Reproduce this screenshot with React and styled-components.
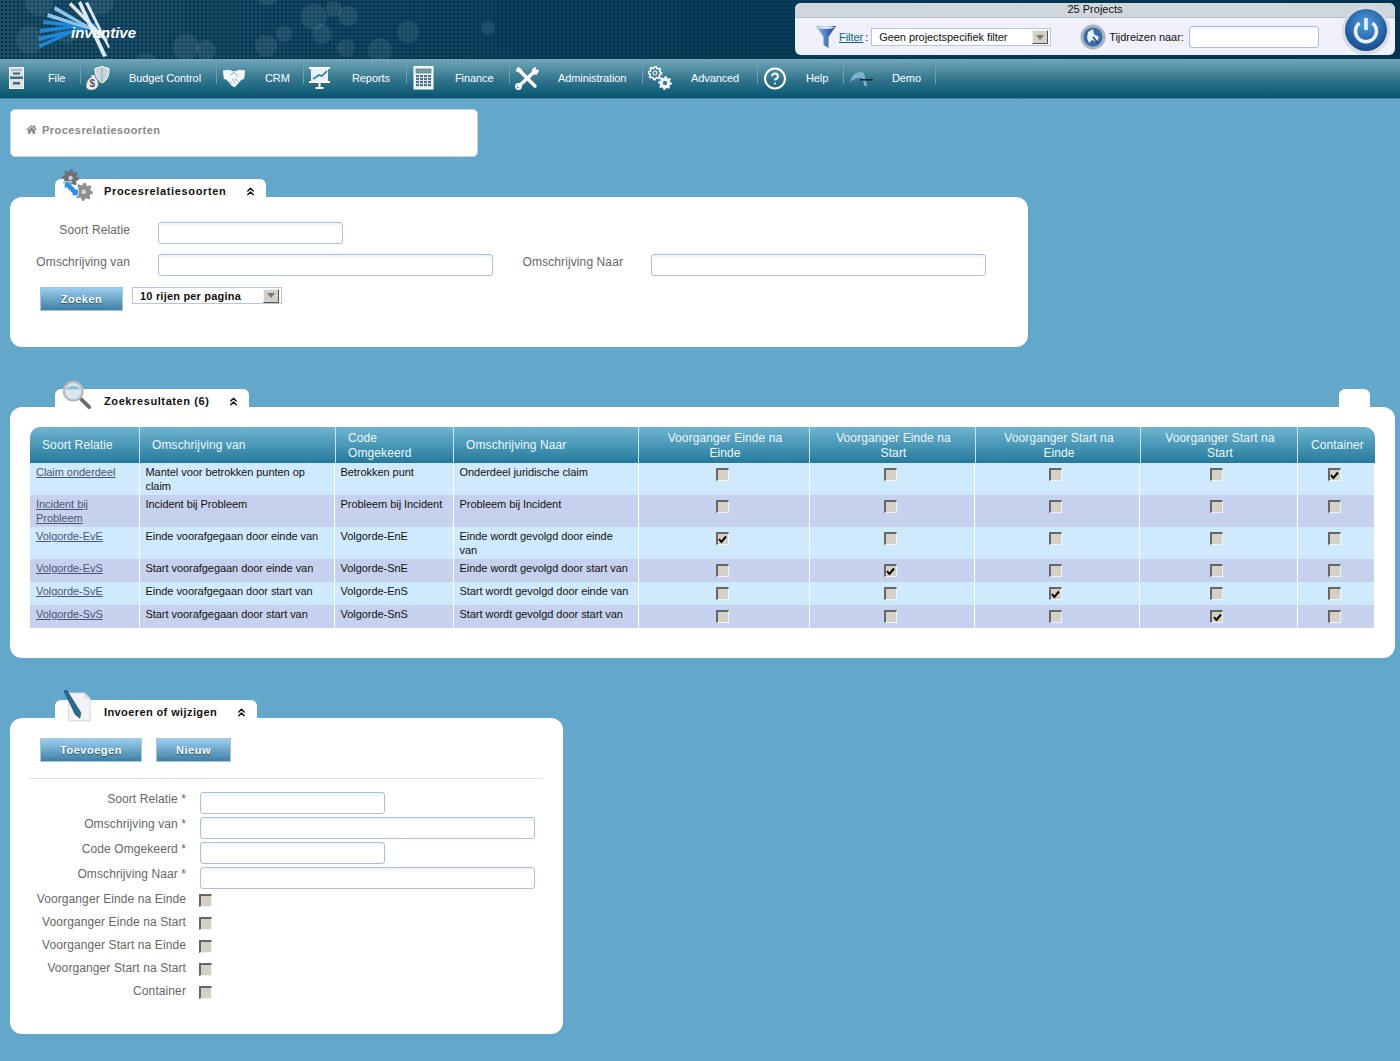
import { Fragment } from "react"
import styled, { createGlobalStyle } from "styled-components"
import { FaHome } from "react-icons/fa"
import { ChevronsUp, CircleHelp } from "lucide-react"

const GlobalStyle = createGlobalStyle`
  html, body { margin: 0; padding: 0; background: #63a7cb; }
  body { font-family: "Liberation Sans", Arial, sans-serif; }
  * { box-sizing: border-box; }
`

const HEAD_COLS = "110px 196px 118px 185px 171px 166px 165px 157px 77px"
const BODY_COLS = "109.5px 195px 119px 185px 171px 165px 165px 158px 76.5px"

const gearPath = (cx, cy, r, teeth = 8) => {
  const pts = []
  for (let i = 0; i < teeth * 4; i++) {
    const a = (i / (teeth * 4)) * Math.PI * 2
    const rad = i % 4 < 2 ? r : r * 0.76
    pts.push(`${(cx + rad * Math.cos(a)).toFixed(1)} ${(cy + rad * Math.sin(a)).toFixed(1)}`)
  }
  return `M${pts.join("L")}Z`
}

/* ---------- drawings ---------- */

const Bubbles = () => (
  <BubbleSvg viewBox="0 0 1400 59" preserveAspectRatio="none">
    {[
      [39, 2, 14], [100, 1, 14], [30, 40, 14], [67, 31, 12], [186, 47, 13], [206, 50, 10],
      [267, -8, 13], [314, 17, 13], [322, 34, 10], [334, 9, 8], [348, 16, 10], [284, 34, 8],
      [346, 48, 9], [380, 50, 12], [408, 32, 11], [266, 46, 11], [146, 65, 12], [488, 28, 7],
    ].map(([x, y, r]) => (
      <circle key={`${x}-${y}`} cx={x} cy={y} r={r} fill="#7fa9bb" opacity="0.16" />
    ))}
  </BubbleSvg>
)

const Logo = () => (
  <LogoSvg viewBox="0 0 140 59" width="140" height="59">
    <g fill="#1f88d8">
      <polygon points="43,20 43,24 100,29 100,27" />
      <polygon points="40,29 40,33 96,25 96,23" />
      <polygon points="38,37 39,41 96,27 95,25" />
      <polygon points="38,45 40,48 92,24 91,22" />
    </g>
    <g fill="#8cc4ec">
      <polygon points="48,13 47,17 104,34 104,32" />
      <polygon points="55,6 54,10 105,38 106,36" />
    </g>
    <g fill="#dbeaf6">
      <polygon points="71,2 69,5 106,42 108,40" />
      <polygon points="81,1 78,3 103,57 107,56" />
      <polygon points="88,2 85,3 108,48 110,47" />
    </g>
  </LogoSvg>
)

const CabinetIcon = () => (
  <svg width="24" height="24" viewBox="0 0 24 24">
    <rect x="4.500" y="1.500" width="14" height="21" fill="#dbe3e7" stroke="#f4f7f8" />
    <rect x="5" y="10.500" width="13" height="2.500" fill="#3d6e85" />
    <rect x="6" y="3.500" width="11" height="1" fill="#7f9dac" />
    <rect x="8" y="6.500" width="7" height="2" fill="#44677a" />
    <rect x="8" y="16" width="7" height="2.500" fill="#44677a" />
  </svg>
)

const HandshakeIcon = () => (
  <svg width="26" height="24" viewBox="0 0 26 24">
    <path d="M1 4l6-1 6 2 6-2 6 1-1 9-3 1-7 8-3-1-6-7-3-1z" fill="#f4f7f8" />
    <path d="M9 9l4-3 5 5M8 15l3 3M11 13l3 4M14 12l3 4" fill="none" stroke="#6f98a9" strokeWidth=".9" />
  </svg>
)

const BudgetIcon = () => (
  <svg width="24" height="24" viewBox="0 0 24 24">
    <path d="M9 2.500l7-2 7 2c0 7-1 11-7 14.500-5-3-7-8-7-14.500z" fill="#c9d6dc" stroke="#fff" />
    <path d="M16 2v14" stroke="#8aa" />
    <path d="M5 9h5l-1 2.500c4 3 5.500 11-2.500 12.500-6 0-7-3-6-6 0-3 3-6 5-7z" fill="#eee" stroke="#889" strokeWidth=".6" />
    <text x="3.500" y="21" fontSize="10" fontWeight="700" fill="#556" fontFamily="Liberation Sans">$</text>
  </svg>
)

const ReportsIcon = () => (
  <svg width="24" height="24" viewBox="0 0 24 24">
    <rect x="0" y="1" width="21" height="2" fill="#fff" />
    <rect x="2" y="3" width="17" height="12" fill="#e9f0f3" />
    <path d="M4 13l6-4 3 1 5-5" stroke="#2f7ea2" strokeWidth="1.600" fill="none" />
    <rect x="0" y="15" width="21" height="2" fill="#fff" />
    <path d="M10.500 17v4" stroke="#fff" strokeWidth="2" />
    <rect x="6.500" y="21" width="8" height="2" fill="#fff" />
  </svg>
)

const CalcIcon = () => (
  <svg width="24" height="24" viewBox="0 0 24 24">
    <rect x="2" y="0" width="19" height="23" fill="#eef3f5" stroke="#fff" />
    <rect x="4" y="3" width="15" height="4" fill="#7f9cab" stroke="#3f6578" strokeWidth=".6" />
    {[5, 9, 13, 17].map((x) => [10, 13, 16, 19].map((y) => (
      <rect key={`${x}-${y}`} x={x - 1} y={y - 1} width="3" height="2.200" fill="#4b7488" />
    )))}
  </svg>
)

const ToolsIcon = () => (
  <svg width="24" height="24" viewBox="0 0 24 24" fill="none" stroke="#fff" strokeLinecap="round">
    <path d="M4 20L19 6" strokeWidth="3.400" />
    <path d="M4 4l16 16" strokeWidth="3.400" />
    <path d="M18 8l-1-4 3-3 1 3 3 0-2 4z" fill="#fff" strokeWidth=".6" />
    <path d="M5 6L1 5l2-4 4 3z" fill="#fff" strokeWidth=".6" />
    <circle cx="3.500" cy="20.500" r="2.600" strokeWidth="1.600" />
  </svg>
)

const GearsIcon = () => (
  <svg width="24" height="24" viewBox="0 0 24 24">
    <path d={gearPath(7, 7, 6.6)} fill="none" stroke="#fff" strokeWidth="1.500" />
    <circle cx="7" cy="7" r="2" fill="none" stroke="#fff" />
    <path d={gearPath(17, 17, 7)} fill="#f2f6f8" />
    <circle cx="17" cy="17" r="2.200" fill="#3f7c95" />
  </svg>
)

const DemoIcon = () => (
  <svg width="24" height="24" viewBox="0 0 24 24">
    <path d="M1 16C3 7 10 4 15 7l3 12-2 2-3-9C9 11 5 13 1 16z" fill="#7fb0cc" />
    <path d="M1 16c3-3 7-4 11-4l1 2c-4-1-8 0-12 2z" fill="#2b86cf" />
    <rect x="11" y="13" width="13" height="1.600" fill="#223" />
  </svg>
)

const Funnel = () => (
  <svg width="24" height="24" viewBox="0 0 24 24">
    <defs>
      <linearGradient id="fun" x1="0" x2="1">
        <stop offset="0" stopColor="#9fc3e6" />
        <stop offset="0.6" stopColor="#3f6fb0" />
        <stop offset="1" stopColor="#1f4a8a" />
      </linearGradient>
    </defs>
    <path d="M2 1h20l-7.500 11v11l-5-3v-8z" fill="url(#fun)" />
    <ellipse cx="12" cy="2.500" rx="8" ry="1.400" fill="#dceaf6" />
  </svg>
)

const TimeGlobe = () => (
  <svg width="26" height="26" viewBox="0 0 26 26">
    <circle cx="13" cy="13" r="12.500" fill="#a9b3bd" />
    <circle cx="13" cy="13" r="9.500" fill="#3a6aa5" />
    <path d="M8 8l5-3 1 5 5 3-2 5-5-2-3 3-2-5z" fill="#e7eef6" />
    <path d="M13 13l5 6" stroke="#1c3f70" strokeWidth="1.400" />
  </svg>
)

const Power = () => (
  <svg width="50" height="50" viewBox="0 0 50 50">
    <defs>
      <radialGradient id="pow" cx="0.5" cy="0.35" r="0.75">
        <stop offset="0" stopColor="#4f9cdf" />
        <stop offset="1" stopColor="#0d3f7e" />
      </radialGradient>
    </defs>
    <circle cx="25" cy="25" r="24" fill="#d7dde2" />
    <circle cx="25" cy="24" r="21" fill="url(#pow)" />
    <path d="M18.500 17a10.500 10.500 0 1 0 13 0" fill="none" stroke="#e9f2fa" strokeWidth="3.400" />
    <path d="M25 12v12" stroke="#e9f2fa" strokeWidth="3.600" />
  </svg>
)

const GearsArrow = () => (
  <svg width="33" height="33" viewBox="0 0 36 36">
    <path d={gearPath(11.5, 11, 9.5)} fill="#6f7172" />
    <circle cx="11.500" cy="11" r="3" fill="#c9cbcc" stroke="#444" strokeWidth=".6" />
    <path d={gearPath(26, 26, 10)} fill="#8d8f90" />
    <circle cx="26" cy="26" r="3.500" fill="#c9cbcc" stroke="#555" strokeWidth=".6" />
    <path d="M5 15h8l-2 2 7 7 2-2v8h-8l2-2-7-7-2 2z" fill="#2e8fe0" stroke="#d6ebfb" strokeWidth="1" />
  </svg>
)

const Magnifier = () => (
  <svg width="30" height="30" viewBox="0 0 32 32">
    <path d="M18 18l11 11" stroke="#6d6d6d" strokeWidth="4" strokeLinecap="round" />
    <circle cx="12" cy="12" r="10" fill="#d7e8ee" stroke="#b7bbbd" strokeWidth="2.600" />
    <path d="M4 10c4-5 12-5 16 0z" fill="#8fc0d2" />
  </svg>
)

const PenPaper = () => (
  <svg width="28" height="32" viewBox="0 0 30 34">
    <path d="M5 3h17l6 6v24H5z" fill="#f1f3f4" stroke="#d3d6d8" />
    <path d="M22 3v6h6z" fill="#d9dcde" />
    <path d="M0 1l3-1 15 24-1 6-5-4z" fill="#2c6a8e" stroke="#123f5c" strokeWidth=".6" />
  </svg>
)

const Check = () => (
  <svg width="9" height="9" viewBox="0 0 9 9">
    <path d="M1 4l2.400 3L8 1.500" fill="none" stroke="#000" strokeWidth="2" />
  </svg>
)

/* ---------- page parts ---------- */

const Header = styled.header`
  position: relative;
  height: 59px;
  display: flex;
  justify-content: space-between;
  padding: 0 5px 0 0;
  overflow: hidden;
  background-color: #03344f;
  background-image: radial-gradient(#03304a 1px, transparent 1.2px),
    linear-gradient(90deg, #1d4e66, #0a3f5b 40%, #03364f);
  background-size: 4px 4px, 100% 100%;
`

const BubbleSvg = styled.svg`
  position: absolute;
  inset: 0;
  width: 100%;
  height: 100%;
`

const LogoWrap = styled.div`
  position: relative;
  width: 140px;
  height: 59px;
`

const LogoSvg = styled.svg`
  display: block;
`

const LogoText = styled.span`
  position: absolute;
  left: 71px;
  top: 24px;
  color: #fff;
  font: italic 700 15px/18px "Liberation Sans", sans-serif;
`

const ProjectBox = styled.div`
  position: relative;
  width: 600px;
  height: 52px;
  margin-top: 3px;
  border-radius: 6px;
  background: #eff0f9;
`

const ProjectTitle = styled.div`
  height: 15px;
  border-radius: 6px 6px 0 0;
  border-bottom: 1px solid #b8c2ca;
  background: #cfd6dc;
  color: #111;
  text-align: center;
  font-size: 11px;
  line-height: 13px;
`

const ProjectRow = styled.div`
  display: flex;
  align-items: center;
  height: 37px;
  padding-left: 19px;
  font-size: 11px;
  letter-spacing: -0.05px;
  color: #111;
`

const FilterLink = styled.a`
  color: #07657f;
  text-decoration: underline;
  margin-left: 1px;
  padding-top: 1px;
`

const Colon = styled.span`
  margin: 0 3px 0 2px;
  padding-top: 1px;
`

const SelectBox = styled.div`
  display: flex;
  align-items: center;
  justify-content: space-between;
  width: ${(p) => p.$w}px;
  height: ${(p) => p.$h}px;
  padding: ${(p) => (p.$bold ? "0 1px 0 7px" : "1px 1px 0 7px")};
  border: 1px solid #b3c7d8;
  background: #fff;
  color: #111;
  font-size: 11px;
  font-weight: ${(p) => (p.$bold ? 700 : 400)};
  letter-spacing: ${(p) => (p.$bold ? "0.2px" : "-0.05px")};
`

const SelectArrow = styled.span`
  width: 16px;
  height: 14px;
  margin-right: 1px;
  display: flex;
  align-items: center;
  justify-content: center;
  background: #d4d0c8;
  border: 1px solid;
  border-color: #f2f2f2 #555 #555 #f2f2f2;

  &::after {
    content: "";
    border-left: 4px solid transparent;
    border-right: 4px solid transparent;
    border-top: 5px solid #777;
  }
`

const TimeWrap = styled.div`
  display: flex;
  align-items: center;
  margin-left: 29px;
`

const TimeLabel = styled.span`
  margin: 1px 5px 0 3px;
`

const PowerWrap = styled.div`
  position: absolute;
  right: 4px;
  top: 3px;
  line-height: 0;
`

const Nav = styled.nav`
  display: flex;
  height: 40px;
  border-bottom: 1px solid #4f7f94;
  background: linear-gradient(#72a6b8, #35788f 50%, #065470);
`

const NavItem = styled.div`
  position: relative;
  display: flex;
  align-items: center;
  gap: 19px;
  width: ${(p) => p.$w}px;
  height: 38px;
  padding-left: 5px;
  margin-right: 1px;
  color: #fff;
  font-size: 11px;
  letter-spacing: -0.1px;

  &::after {
    content: "";
    position: absolute;
    top: 0;
    right: -1px;
    width: 1px;
    height: 25px;
    background: #6c9db0;
  }
`

const NavIcon = styled.span`
  width: 24px;
  height: 24px;
  display: flex;
  align-items: center;
  justify-content: center;
  color: #fff;
`

const Main = styled.main`
  padding: 10px 0 27px 10px;
`

const Crumb = styled.div`
  display: flex;
  align-items: center;
  gap: 5px;
  width: 468px;
  height: 48px;
  padding: 0 0 7px 15px;
  border: 1px solid #c3d5e0;
  border-radius: 5px;
  background: #fff;
  color: #888;
  font-size: 11px;
  font-weight: 700;
  letter-spacing: 0.45px;
`

const Section = styled.section`
  width: ${(p) => p.$w}px;
  margin-top: ${(p) => p.$top}px;
`

const TabRow = styled.div`
  display: flex;
  justify-content: space-between;
  height: 18px;
  padding: 0 25px 0 45px;
`

const Tab = styled.div`
  position: relative;
  display: flex;
  align-items: center;
  justify-content: space-between;
  width: ${(p) => p.$w}px;
  padding: ${(p) => (p.$empty ? "0" : "6px 9px 0 49px")};
  border-radius: 6px 6px 0 0;
  background: #fff;
  color: #111;
  font-size: 11px;
  font-weight: 700;
  letter-spacing: ${(p) => p.$ls || "0.65px"};
`

const TabIcon = styled.span`
  position: absolute;
  left: ${(p) => p.$left}px;
  top: ${(p) => p.$top}px;
  line-height: 0;
`

const Card = styled.div`
  height: ${(p) => p.$h}px;
  padding: ${(p) => p.$pad};
  border-radius: 12px;
  background: #fff;
`

const SearchRow = styled.div`
  display: flex;
  align-items: flex-start;
  margin-bottom: 10px;
`

const SearchLabel = styled.label`
  width: ${(p) => p.$w}px;
  margin-right: 28px;
  text-align: right;
  color: #666;
  font-size: 12px;
  line-height: 16px;
  letter-spacing: 0.1px;
`

const Field = styled.input`
  display: block;
  width: ${(p) => p.$w}px;
  height: 22px;
  padding: 0 4px;
  border: 1px solid #a9c0d6;
  border-radius: 3px;
  background: linear-gradient(#f0f4f9, #fff 5px);
  outline: none;
`

const SearchActions = styled.div`
  display: flex;
  align-items: flex-start;
  gap: 9px;
  margin: 11px 0 0 30px;
`

const Button = styled.button`
  width: ${(p) => p.$w}px;
  height: 24px;
  padding: 0;
  border: 1px solid #a9c5dc;
  background: linear-gradient(#9bcdee, #3f80a5);
  color: #fff;
  font: 700 11px "Liberation Sans", sans-serif;
  letter-spacing: 0.5px;
  text-shadow: 0 1px 1px #1f4f6a;
`

const HeadRow = styled.div`
  display: grid;
  grid-template-columns: ${HEAD_COLS};
  height: 36px;
  border-radius: 10px 10px 0 0;
  overflow: hidden;
  background: linear-gradient(#70b5d2, #247a9c);
`

const HeadCell = styled.div`
  display: flex;
  align-items: center;
  justify-content: ${(p) => (p.$center ? "center" : "flex-start")};
  padding: ${(p) => (p.$center ? "1px 15px 0 17px" : "1px 12px 0")};
  border-right: ${(p) => (p.$last ? "none" : "1px solid #cfe3ec")};
  color: #eef7fb;
  text-align: ${(p) => (p.$center ? "center" : "left")};
  font-size: 12px;
  line-height: 15px;
  letter-spacing: 0.1px;
  white-space: pre-line;
`

const BodyRow = styled.div`
  display: grid;
  grid-template-columns: ${BODY_COLS};
  width: 1344px;
  min-height: 23px;
  background: ${(p) => (p.$alt ? "#c6d2ed" : "#d0eafd")};
`

const BodyCell = styled.div`
  padding: 2px 5px 2px 6px;
  border-right: 1px solid #fff;
  color: #111;
  font-size: 11px;
  line-height: 14px;
  letter-spacing: -0.05px;
  white-space: pre-line;
`

const RowLink = styled.a`
  color: #4a5673;
  text-decoration: underline;
`

const BoxCell = styled.div`
  display: flex;
  justify-content: center;
  padding: 5px 3px 0 0;
  border-right: ${(p) => (p.$last ? "none" : "1px solid #fff")};
`

const Checkbox = styled.span`
  display: flex;
  align-items: center;
  justify-content: center;
  flex: none;
  width: 13px;
  height: 13px;
  border: 1px solid;
  border-width: 2px 1px 1px 2px;
  border-color: #666 #f3f3f0 #f3f3f0 #666;
  background: #d4d0c8;
`

const Actions = styled.div`
  display: flex;
  gap: 14px;
  margin-left: 10px;
`

const Divider = styled.hr`
  height: 1px;
  margin: 16px 0 13px;
  border: 0;
  background: #ddd;
`

const FormGrid = styled.div`
  display: grid;
  grid-template-columns: 156px 1fr;
  column-gap: 14px;
  row-gap: 3px;
`

const FormLabel = styled.label`
  text-align: right;
  color: #666;
  font-size: 12px;
  line-height: 14px;
  letter-spacing: 0.1px;
`

const FormBox = styled.div`
  height: 20px;
  padding-top: 2px;
  margin-left: -1px;
`

const navItems = [
  ["File", 80, <CabinetIcon key="i" />],
  ["Budget Control", 135, <BudgetIcon key="i" />],
  ["CRM", 86, <HandshakeIcon key="i" />],
  ["Reports", 102, <ReportsIcon key="i" />],
  ["Finance", 102, <CalcIcon key="i" />],
  ["Administration", 132, <ToolsIcon key="i" />],
  ["Advanced", 114, <GearsIcon key="i" />],
  ["Help", 85, <CircleHelp key="i" size={27} strokeWidth={2} />],
  ["Demo", 91, <DemoIcon key="i" />],
]

const headers = [
  "Soort Relatie",
  "Omschrijving van",
  "Code\nOmgekeerd",
  "Omschrijving Naar",
  "Voorganger Einde na Einde",
  "Voorganger Einde na Start",
  "Voorganger Start na Einde",
  "Voorganger Start na Start",
  "Container",
]

const rows = [
  ["Claim onderdeel", "Mantel voor betrokken punten op\nclaim", "Betrokken punt", "Onderdeel juridische claim", 4],
  ["Incident bij\nProbleem", "Incident bij Probleem", "Probleem bij Incident", "Probleem bij Incident", -1],
  ["Volgorde-EvE", "Einde voorafgegaan door einde van", "Volgorde-EnE", "Einde wordt gevolgd door einde\nvan", 0],
  ["Volgorde-EvS", "Start voorafgegaan door einde van", "Volgorde-SnE", "Einde wordt gevolgd door start van", 1],
  ["Volgorde-SvE", "Einde voorafgegaan door start van", "Volgorde-EnS", "Start wordt gevolgd door einde van", 2],
  ["Volgorde-SvS", "Start voorafgegaan door start van", "Volgorde-SnS", "Start wordt gevolgd door start van", 3],
]

const formFields = [
  ["Soort Relatie *", 185],
  ["Omschrijving van *", 335],
  ["Code Omgekeerd *", 185],
  ["Omschrijving Naar *", 335],
]

const formChecks = [
  "Voorganger Einde na Einde",
  "Voorganger Einde na Start",
  "Voorganger Start na Einde",
  "Voorganger Start na Start",
  "Container",
]

const App = () => {
  return (
    <>
      <GlobalStyle />
      <Header>
        <Bubbles />
        <LogoWrap>
          <Logo />
          <LogoText>invantive</LogoText>
        </LogoWrap>
        <ProjectBox>
          <ProjectTitle>25 Projects</ProjectTitle>
          <ProjectRow>
            <Funnel />
            <FilterLink>Filter</FilterLink>
            <Colon>:</Colon>
            <SelectBox $w={180} $h={18}>
              Geen projectspecifiek filter
              <SelectArrow />
            </SelectBox>
            <TimeWrap>
              <TimeGlobe />
              <TimeLabel>Tijdreizen naar:</TimeLabel>
              <Field $w={130} />
            </TimeWrap>
          </ProjectRow>
          <PowerWrap>
            <Power />
          </PowerWrap>
        </ProjectBox>
      </Header>
      <Nav>
        {navItems.map(([label, w, icon]) => (
          <NavItem key={label} $w={w}>
            <NavIcon>{icon}</NavIcon>
            <span>{label}</span>
          </NavItem>
        ))}
      </Nav>
      <Main>
        <Crumb>
          <FaHome size={11} />
          Procesrelatiesoorten
        </Crumb>

        <Section $w={1018} $top={22}>
          <TabRow>
            <Tab $w={211}>
              <TabIcon $left={5} $top={-11}>
                <GearsArrow />
              </TabIcon>
              Procesrelatiesoorten
              <ChevronsUp size={13} strokeWidth={2.6} />
            </Tab>
          </TabRow>
          <Card $h={150} $pad="25px 0 0 0">
            <SearchRow>
              <SearchLabel $w={120}>Soort Relatie</SearchLabel>
              <Field $w={185} />
            </SearchRow>
            <SearchRow>
              <SearchLabel $w={120}>Omschrijving van</SearchLabel>
              <Field $w={335} />
              <SearchLabel $w={130}>Omschrijving Naar</SearchLabel>
              <Field $w={335} />
            </SearchRow>
            <SearchActions>
              <Button $w={83}>Zoeken</Button>
              <SelectBox $w={150} $h={17} $bold>
                10 rijen per pagina
                <SelectArrow />
              </SelectBox>
            </SearchActions>
          </Card>
        </Section>

        <Section $w={1385} $top={42}>
          <TabRow>
            <Tab $w={194} $ls="0.6px">
              <TabIcon $left={7} $top={-9}>
                <Magnifier />
              </TabIcon>
              Zoekresultaten (6)
              <ChevronsUp size={13} strokeWidth={2.6} />
            </Tab>
            <Tab $w={31} $empty />
          </TabRow>
          <Card $h={251} $pad="20px 20px 0">
            <HeadRow>
              {headers.map((h, i) => (
                <HeadCell key={h} $center={i > 3} $last={i === 8}>
                  {h}
                </HeadCell>
              ))}
            </HeadRow>
            {rows.map(([code, from, back, to, checked], r) => (
              <BodyRow key={code} $alt={r % 2 === 1}>
                <BodyCell>
                  <RowLink>{code}</RowLink>
                </BodyCell>
                <BodyCell>{from}</BodyCell>
                <BodyCell>{back}</BodyCell>
                <BodyCell>{to}</BodyCell>
                {[0, 1, 2, 3, 4].map((c) => (
                  <BoxCell key={c} $last={c === 4}>
                    <Checkbox>{checked === c && <Check />}</Checkbox>
                  </BoxCell>
                ))}
              </BodyRow>
            ))}
          </Card>
        </Section>

        <Section $w={553} $top={42}>
          <TabRow>
            <Tab $w={202} $ls="0.4px">
              <TabIcon $left={9} $top={-10}>
                <PenPaper />
              </TabIcon>
              Invoeren of wijzigen
              <ChevronsUp size={13} strokeWidth={2.6} />
            </Tab>
          </TabRow>
          <Card $h={316} $pad="20px 20px 0">
            <Actions>
              <Button $w={102}>Toevoegen</Button>
              <Button $w={75}>Nieuw</Button>
            </Actions>
            <Divider />
            <FormGrid>
              {formFields.map(([label, w]) => (
                <Fragment key={label}>
                  <FormLabel>{label}</FormLabel>
                  <Field $w={w} />
                </Fragment>
              ))}
              {formChecks.map((label) => (
                <Fragment key={label}>
                  <FormLabel>{label}</FormLabel>
                  <FormBox>
                    <Checkbox />
                  </FormBox>
                </Fragment>
              ))}
            </FormGrid>
          </Card>
        </Section>
      </Main>
    </>
  )
}

export default App
